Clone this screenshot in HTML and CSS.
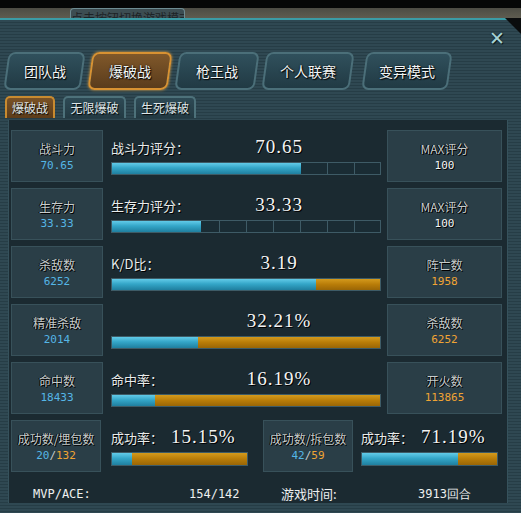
FILE: index.html
```html
<!DOCTYPE html>
<html lang="zh">
<head>
    <meta charset="UTF-8">
    <title>战绩 - 爆破战</title>
    <link rel="stylesheet" href="styles.css">
</head>
<body>
    <div class="topbar">
        <div class="title-tab">点击按钮切换游戏模式</div>
    </div>

    <div class="window">
        <span class="close">✕</span>

        <!-- 模式标签 -->
        <div class="tabs">
            <div class="tab w77"><span>团队战</span></div>
            <div class="tab w80 active"><span>爆破战</span></div>
            <div class="tab w80"><span>枪王战</span></div>
            <div class="tab w88"><span>个人联赛</span></div>
            <div class="tab w86 far"><span>变异模式</span></div>
        </div>

        <div class="subtabs">
            <div class="subtab active w50">爆破战</div>
            <div class="subtab w63">无限爆破</div>
            <div class="subtab w62">生死爆破</div>
        </div>

        <!-- 数据区 -->
        <div class="content">
            <div class="row">
                <div class="box"><div class="box-label">战斗力</div><div class="box-val blue">70.65</div></div>
                <div class="mid">
                    <div class="head"><span class="label">战斗力评分：</span><span class="value">70.65</span></div>
                    <div class="bar seg"><div class="fill" style="width: 70.65%"></div></div>
                </div>
                <div class="box"><div class="box-label">MAX评分</div><div class="box-val white">100</div></div>
            </div>

            <div class="row">
                <div class="box"><div class="box-label">生存力</div><div class="box-val blue">33.33</div></div>
                <div class="mid">
                    <div class="head"><span class="label">生存力评分：</span><span class="value">33.33</span></div>
                    <div class="bar seg"><div class="fill" style="width: 33.33%"></div></div>
                </div>
                <div class="box"><div class="box-label">MAX评分</div><div class="box-val white">100</div></div>
            </div>

            <div class="row">
                <div class="box"><div class="box-label">杀敌数</div><div class="box-val blue">6252</div></div>
                <div class="mid">
                    <div class="head"><span class="label">K/D比：</span><span class="value">3.19</span></div>
                    <div class="bar split"><div class="fill" style="width: 76.15%"></div></div>
                </div>
                <div class="box"><div class="box-label">阵亡数</div><div class="box-val orange">1958</div></div>
            </div>

            <div class="row">
                <div class="box"><div class="box-label">精准杀敌</div><div class="box-val blue">2014</div></div>
                <div class="mid">
                    <div class="head"><span class="label"></span><span class="value">32.21%</span></div>
                    <div class="bar split"><div class="fill" style="width: 32.21%"></div></div>
                </div>
                <div class="box"><div class="box-label">杀敌数</div><div class="box-val orange">6252</div></div>
            </div>

            <div class="row">
                <div class="box"><div class="box-label">命中数</div><div class="box-val blue">18433</div></div>
                <div class="mid">
                    <div class="head"><span class="label">命中率：</span><span class="value">16.19%</span></div>
                    <div class="bar split"><div class="fill" style="width: 16.19%"></div></div>
                </div>
                <div class="box"><div class="box-label">开火数</div><div class="box-val orange">113865</div></div>
            </div>

            <div class="row half-row">
                <div class="box small"><div class="box-label">成功数/埋包数</div><div class="box-val"><span class="blue">20</span>/<span class="orange">132</span></div></div>
                <div class="mid half first">
                    <div class="head"><span class="label short">成功率：</span><span class="value">15.15%</span></div>
                    <div class="bar split"><div class="fill" style="width: 15.15%"></div></div>
                </div>
                <div class="box small"><div class="box-label">成功数/拆包数</div><div class="box-val"><span class="blue">42</span>/<span class="orange">59</span></div></div>
                <div class="mid half second">
                    <div class="head"><span class="label short">成功率：</span><span class="value">71.19%</span></div>
                    <div class="bar split"><div class="fill" style="width: 71.19%"></div></div>
                </div>
            </div>

            <div class="info">
                <span class="mono">MVP/ACE:</span>
                <span class="mono">154/142</span>
                <span>游戏时间:</span>
                <span class="mono">3913回合</span>
            </div>
        </div>
    </div>
</body>
</html>
```

FILE: styles.css
```css
body {
    margin: 0;
    width: 521px;
    height: 513px;
    overflow: hidden;
    background: #0a0c0d;
    font-family: "Noto Sans CJK SC", "DejaVu Sans", sans-serif;
    color: #e6e6e6;
}
.topbar {
    height: 18px;
    background: linear-gradient(#060707 0 8px, #4c4c44 8px, #5e5c50 18px);
    overflow: hidden;
}
.title-tab {
    margin: 8px 0 0 70px;
    width: 115px;
    height: 20px;
    box-sizing: border-box;
    border: 1px solid #6e8c92;
    border-bottom: none;
    border-radius: 4px 4px 0 0;
    background: #3c4d52;
    color: #1c2226;
    font-size: 12px;
    line-height: 18px;
    text-align: center;
    white-space: nowrap;
    overflow: hidden;
}
.window {
    position: relative;
    height: 495px;
    border-top: 2px solid #3b9ca6;
    background: repeating-linear-gradient(#2f4852 0 2px, #263d46 2px 3px);
    clip-path: polygon(0 0, calc(100% - 16px) 0, 100% 16px, 100% 100%, 0 100%);
}
.close {
    position: absolute;
    top: 7px;
    right: 16px;
    color: #a6d2d4;
    font-size: 19px;
    font-weight: bold;
    line-height: 20px;
    text-shadow: 0 0 2px #0d1a1e, 1px 1px 0 #0d1a1e;
}
.tabs {
    display: flex;
    gap: 7px;
    padding: 32px 0 0 6px;
}
.tab {
    height: 38px;
    box-sizing: border-box;
    border: 2px solid #4b6f79;
    border-radius: 7px;
    background: linear-gradient(#30505c, #213a44);
    transform: skewX(-8deg);
    display: flex;
    align-items: center;
    justify-content: center;
}
.tab span {
    transform: skewX(8deg);
    font-size: 14px;
    color: #f2f6f6;
    text-shadow: 0 0 2px #000, 1px 1px 1px #000;
}
.tab.active {
    border-color: #d89232;
    background: linear-gradient(#80582a, #5a3c1c);
    box-shadow: 0 0 3px #e0a040;
}
.tab.far {
    margin-left: 5px;
}
.w77 { width: 77px; }
.w80 { width: 80px; }
.w88 { width: 88px; }
.w86 { width: 86px; }
.w50 { width: 50px; }
.w63 { width: 63px; }
.w62 { width: 62px; }
.subtabs {
    display: flex;
    gap: 8px;
    padding: 6px 0 0 5px;
}
.subtab {
    height: 22px;
    box-sizing: border-box;
    border: 2px solid #4d717a;
    border-bottom: none;
    border-radius: 5px 5px 0 0;
    background: linear-gradient(#2e4a55, #233a43);
    font-size: 12px;
    line-height: 20px;
    text-align: center;
    color: #dfe6e8;
    text-shadow: 1px 1px 1px #000;
}
.subtab.active {
    border-color: #c88a30;
    background: linear-gradient(#7a5226, #5c3c1a);
}
.content {
    margin: 2px 13px 0 8px;
    height: 373px;
    padding: 10px 0 0 2px;
    background: #1b2a31;
    border-left: 1px solid #36525c;
    border-right: 1px solid #36525c;
    overflow: hidden;
}
.row {
    display: flex;
    height: 52px;
    margin-bottom: 6px;
}
.row > * {
    flex-shrink: 0;
}
.box {
    width: 92px;
    box-sizing: border-box;
    border: 1px solid #38515a;
    background: #2a3e47;
    display: flex;
    flex-direction: column;
    align-items: center;
    justify-content: center;
    gap: 2px;
}
.row .box:last-child {
    width: 115px;
}
.box.small {
    width: 90px;
}
.box-label {
    font-size: 12px;
    color: #c6cccc;
    text-shadow: 1px 1px 0 #000, -1px 0 0 #000;
}
.box-val {
    font-family: "DejaVu Sans Mono", monospace;
    font-size: 11px;
    color: #c6cccc;
}
.blue { color: #55b6e6; }
.orange { color: #f0a434; }
.box-val.white { color: #f4f4f4; text-shadow: 1px 1px 0 #000; }
.mid {
    width: 284px;
    box-sizing: border-box;
    padding: 4px 6px 0 8px;
}
.head {
    display: flex;
    align-items: center;
    height: 26px;
    margin-bottom: 2px;
}
.label {
    width: 118px;
    font-size: 13px;
    color: #e8ecec;
    text-shadow: 1px 1px 0 #000;
}
.label.short {
    width: 60px;
}
.value {
    width: 100px;
    text-align: center;
    font-family: "Liberation Serif", serif;
    font-size: 19px;
    letter-spacing: 1px;
    color: #f4f4f4;
    text-shadow: 1px 1px 0 #000;
}
.half .value {
    width: auto;
    text-align: left;
}
.bar {
    height: 13px;
    box-sizing: border-box;
    border: 1px solid #3e5b66;
    background: #1a2c34;
}
.bar.seg {
    background: repeating-linear-gradient(90deg, transparent 0 26px, #3e5b66 26px 27px), #1a2c34;
}
.bar.split {
    background: linear-gradient(#d49a1c, #b87c08 50%, #9a6606);
}
.fill {
    height: 100%;
    background: linear-gradient(#62cbe8, #34a6c8 45%, #1f7f9f);
}
.half-row .mid.first {
    width: 162px;
    padding: 4px 15px 0 10px;
}
.half-row .mid.second {
    width: 145px;
    padding: 4px 0 0 8px;
}
.half-row .bar {
    height: 14px;
}
.info {
    display: grid;
    grid-template-columns: 156px 92px 137px auto;
    padding: 8px 0 0 22px;
    font-size: 13px;
    line-height: 16px;
    color: #eef0f0;
}
.mono {
    font-family: "DejaVu Sans Mono", monospace;
    font-size: 12px;
}
```
